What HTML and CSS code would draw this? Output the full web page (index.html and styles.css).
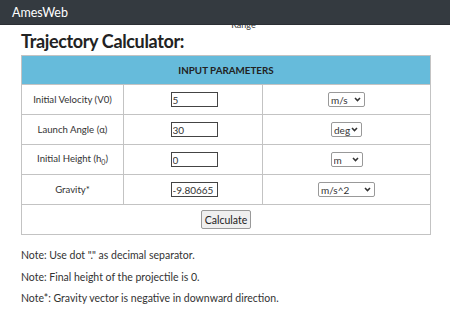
FILE: index.html
```html
<!DOCTYPE html>
<html>
<head>
<meta charset="utf-8">
<link rel="stylesheet" href="styles.css">
</head>
<body>
<header class="topbar"><span class="brand">AmesWeb</span></header>
<main class="content">
  <div class="peek">Range</div>
  <h1 class="title">Trajectory Calculator:</h1>
  <table class="calc">
    <tr><th colspan="3" class="head">INPUT PARAMETERS</th></tr>
    <tr>
      <td class="label">Initial Velocity (V0)</td>
      <td class="val"><input class="num" type="text" value="5"></td>
      <td class="unit"><select class="sel w-ms"><option>m/s</option></select></td>
    </tr>
    <tr>
      <td class="label">Launch Angle (α)</td>
      <td class="val"><input class="num" type="text" value="30"></td>
      <td class="unit"><select class="sel w-deg"><option>deg</option></select></td>
    </tr>
    <tr>
      <td class="label">Initial Height (h<sub>0</sub>)</td>
      <td class="val"><input class="num" type="text" value="0"></td>
      <td class="unit"><select class="sel w-m"><option>m</option></select></td>
    </tr>
    <tr>
      <td class="label">Gravity*</td>
      <td class="val"><input class="num" type="text" value="-9.80665"></td>
      <td class="unit"><select class="sel w-g"><option>m/s^2</option></select></td>
    </tr>
    <tr><td colspan="3" class="btncell"><button class="btn">Calculate</button></td></tr>
  </table>
  <p class="note">Note: Use dot "." as decimal separator.</p>
  <p class="note">Note: Final height of the projectile is 0.</p>
  <p class="note">Note*: Gravity vector is negative in downward direction.</p>
</main>
</body>
</html>
```
FILE: styles.css
```css
html, body { margin: 0; padding: 0; background: #fff; }
body { font-family: Lato, "Noto Sans", sans-serif; color: #333; }
.topbar {
  position: fixed; top: 0; left: 0; right: 0; height: 25px; box-sizing: border-box;
  background: #343a40; border-bottom: 1px solid #2b2f34;
  display: flex; align-items: center; padding-left: 12px; z-index: 5;
}
.brand { color: #fff; font-size: 12.5px; }
.content { padding: 20px 20px 0 21px; }
.peek { font-size: 9px; line-height: 10px; height: 10px; text-align: center; padding-left: 18px; width: 409px; color: #333; }
.title { margin: 0; font-size: 18px; font-weight: 700; line-height: 22px; color: #222; height: 25px; letter-spacing: -0.35px; }
.calc { width: 410px; border-collapse: collapse; font-size: 9.6px; border: 1px solid #b5b5b5; }
.calc td, .calc th { border: 1px solid #c3c3c3; padding: 0; text-align: center; }
.head { background: #66bbdb; height: 28px; font-weight: 700; font-size: 9.8px; color: #222; border-color: #b5b5b5; }
.label { width: 101px; height: 29px; }
.val { width: 138px; }
.num {
  width: 47px; height: 15px; box-sizing: border-box; border: 1.5px solid #444;
  font: 10px Lato, sans-serif; padding: 0 1px; color: #333; margin-left: 2px;
}
.sel {
  -webkit-appearance: none; appearance: none;
  height: 15px; box-sizing: border-box; border: 1px solid #999; border-radius: 2px;
  font: 10px Lato, sans-serif; padding: 0 1px 0 2px; color: #333; text-align: left;
  background: #fff url("data:image/svg+xml;utf8,<svg xmlns='http://www.w3.org/2000/svg' width='7' height='5' viewBox='0 0 7 5'><path d='M1 1 L3.5 3.6 L6 1' fill='none' stroke='%23333' stroke-width='1.5'/></svg>") no-repeat right 3px center;
}
.w-ms { width: 37px; }
.w-deg { width: 31px; }
.w-m { width: 32px; }
.w-g { width: 57px; }
.btncell { height: 29px; }
.btn {
  font: 10.5px Lato, sans-serif; padding: 1px 3px; height: 19px;
  border: 1px solid #999; border-radius: 2px; background: #efefef; color: #222;
}
sub { font-size: 7px; }
.note { font-size: 10.5px; margin: 0; line-height: 21.5px; }
.note:first-of-type { margin-top: 10px; }
```
